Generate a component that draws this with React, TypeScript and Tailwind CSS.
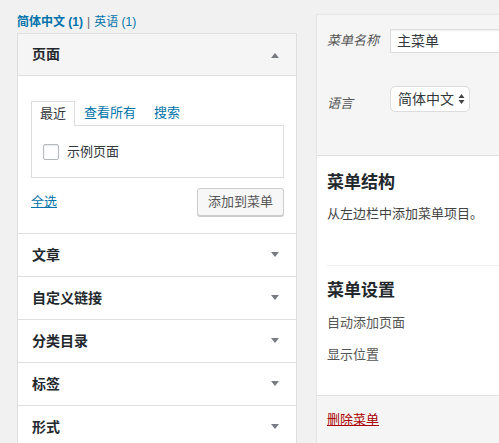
import React from 'react';

const font = { fontFamily: '"Liberation Sans", "Noto Sans CJK SC", sans-serif' };

const Arrow = ({ up }: { up?: boolean }) => (
  <svg width="10" height="6" viewBox="0 0 10 6" className="text-[#787c82]">
    {up ? <path d="M1 6 L5 1 L9 6 Z" fill="currentColor" /> : <path d="M1 0 L9 0 L5 5 Z" fill="currentColor" />}
  </svg>
);

const Row = ({ title }: { title: string }) => (
  <div className="h-[43px] border-t border-[#dfdfdf] bg-white pl-[14px] pr-[16px] flex items-center justify-between">
    <span className="text-[14px] font-bold text-[#23282d]">{title}</span>
    <Arrow />
  </div>
);

export default function App() {
  return (
    <div className="w-[499px] h-[443px] bg-[#f1f1f1] overflow-hidden flex items-start text-[13px] text-[#444]" style={font}>
      {/* left column */}
      <div className="w-[297px] shrink-0 pl-[17px]">
        <div className="h-[33px] pt-[14px] text-[12px] leading-[17px]">
          <a className="text-[#0073aa] font-bold">简体中文 (1)</a>
          <span className="text-[#666] mx-[4px]">|</span>
          <a className="text-[#0073aa]">英语 (1)</a>
        </div>
        <div className="w-[280px] border border-[#dfdfdf] border-b-0">
          <div className="h-[42px] bg-[#f5f5f5] border-b border-[#dfdfdf] pl-[14px] pr-[16px] flex items-center justify-between">
            <span className="text-[14px] font-bold text-[#23282d]">页面</span>
            <Arrow up />
          </div>
          <div className="bg-white pt-[25px] pl-[13px] pr-[12px] pb-[17px]">
            <div className="flex h-[24px]">
              <div className="px-[8px] border border-b-0 border-[#dddddd] bg-white h-[25px] relative z-10 leading-[23px] text-[#32373c]">最近</div>
              <div className="px-[9px] leading-[24px] text-[#0073aa]">查看所有</div>
              <div className="px-[9px] leading-[24px] text-[#0073aa]">搜索</div>
            </div>
            <div className="h-[53px] border border-[#dddddd] pl-[11px] flex items-center">
              <span className="w-[16px] h-[16px] border border-[#b4b9be] rounded-[2px] bg-white shadow-[inset_0_1px_2px_rgba(0,0,0,0.1)]" />
              <span className="ml-[8px] text-[#32373c]">示例页面</span>
            </div>
            <div className="mt-[10px] flex items-center justify-between">
              <a className="text-[#0073aa] underline">全选</a>
              <button className="h-[28px] px-[10px] border border-[#cccccc] rounded-[3px] bg-[#f7f7f7] shadow-[0_1px_0_#cccccc] text-[#555] text-[13px]">添加到菜单</button>
            </div>
          </div>
          <Row title="文章" />
          <Row title="自定义链接" />
          <Row title="分类目录" />
          <Row title="标签" />
          <Row title="形式" />
        </div>
      </div>

      {/* right column */}
      <div className="ml-[19px] mt-[14px] flex-1 min-w-[300px] border border-[#e5e5e5] border-r-0">
        <div className="bg-[#f5f5f5] border-b border-[#dfdfdf] pl-[10px] pt-[14px] pb-[41px]">
          <div className="flex items-center h-[24px]">
            <span className="italic text-[#555] w-[63px]">菜单名称</span>
            <div className="flex-1 h-[24px] border border-[#dddddd] bg-white shadow-[inset_0_1px_2px_rgba(0,0,0,0.07)] pl-[6px] text-[14px] leading-[22px] text-[#32373c]">主菜单</div>
          </div>
          <div className="flex items-start mt-[33px]">
            <span className="italic text-[#555] w-[63px] mt-[8px]">语言</span>
            <div className="h-[26px] w-[80px] border border-[#dddddd] rounded-[5px] bg-white pl-[7px] pr-[4px] flex items-center justify-between text-[14px] text-[#32373c]">
              <span>简体中文</span>
              <svg width="7" height="12" viewBox="0 0 7 12" className="text-[#444]">
                <path d="M0.5 5 L3.5 1 L6.5 5 Z M0.5 7 L6.5 7 L3.5 11 Z" fill="currentColor" />
              </svg>
            </div>
          </div>
        </div>
        <div className="bg-white pl-[10px] pt-[15px] pb-[30px]">
          <div className="text-[17px] font-bold leading-[24px] text-[#23282d]">菜单结构</div>
          <div className="mt-[9px] leading-[20px] text-[#444]">从左边栏中添加菜单项目。</div>
          <div className="mt-[41px] border-t border-[#eeeeee] pt-[13px]">
            <div className="text-[17px] font-bold leading-[24px] text-[#23282d]">菜单设置</div>
            <div className="mt-[10px] leading-[20px] text-[#555]">自动添加页面</div>
            <div className="mt-[12px] leading-[20px] text-[#555]">显示位置</div>
          </div>
        </div>
        <div className="bg-[#f5f5f5] border-t border-[#dfdfdf] pl-[10px] pt-[14px] h-[60px]">
          <a className="text-[#a00] underline leading-[20px]">删除菜单</a>
        </div>
      </div>
    </div>
  );
}
